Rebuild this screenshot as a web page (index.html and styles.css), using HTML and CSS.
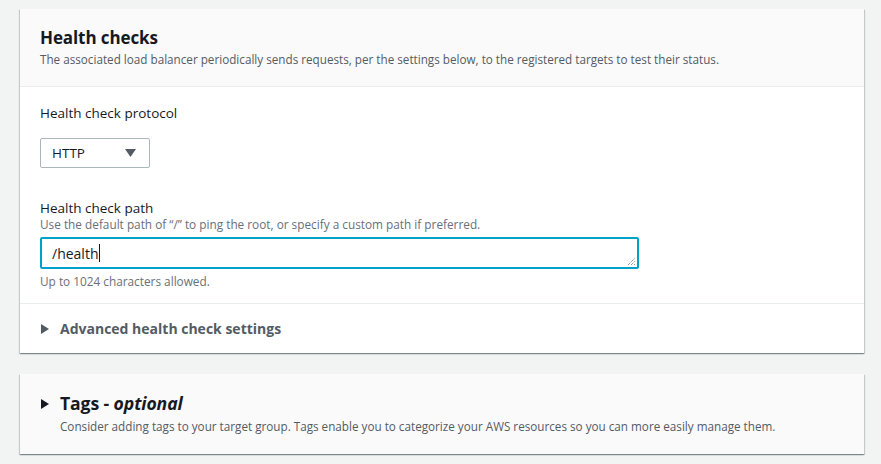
FILE: index.html
```html
<!DOCTYPE html>
<html>
<head>
<meta charset="utf-8">
<link rel="stylesheet" href="styles.css">
</head>
<body>
<div class="page">
  <section class="card">
    <header class="card-head">
      <h2 class="title">Health checks</h2>
      <p class="desc">The associated load balancer periodically sends requests, per the settings below, to the registered targets to test their status.</p>
    </header>
    <div class="card-body">
      <div class="field">
        <label class="label">Health check protocol</label>
        <div class="select">
          <span>HTTP</span>
          <svg class="caret" width="11" height="8" viewBox="0 0 11 8"><path d="M0 0 H11 L5.5 8 Z" fill="#545b64"/></svg>
        </div>
      </div>
      <div class="field field-path">
        <label class="label">Health check path</label>
        <div class="hint">Use the default path of “/” to ping the root, or specify a custom path if preferred.</div>
        <div class="textarea">
          <span class="value">/health</span><span class="cursor"></span>
          <svg class="grip" width="9" height="9" viewBox="0 0 9 9"><path d="M1 8 L8 1 M4 8 L8 4 M7 8 L8 7" stroke="#5f6b7a" stroke-width="1" stroke-dasharray="1 1"/></svg>
        </div>
        <div class="constraint">Up to 1024 characters allowed.</div>
      </div>
    </div>
    <div class="expander">
      <svg class="tri" width="8" height="10" viewBox="0 0 8 10"><path d="M0 0 L8 5 L0 10 Z" fill="#545b64"/></svg>
      <span class="exp-title">Advanced health check settings</span>
    </div>
  </section>

  <section class="card card-tags">
    <div class="tags-row">
      <svg class="tri" width="8" height="10" viewBox="0 0 8 10"><path d="M0 0 L8 5 L0 10 Z" fill="#16191f"/></svg>
      <div>
        <h2 class="title">Tags - <i>optional</i></h2>
        <p class="desc">Consider adding tags to your target group. Tags enable you to categorize your AWS resources so you can more easily manage them.</p>
      </div>
    </div>
  </section>
</div>
</body>
</html>
```

FILE: styles.css
```css
* { box-sizing: border-box; }
html, body { margin: 0; padding: 0; }
body {
  background: #f2f3f3;
  font-family: "Open Sans", "Noto Sans", sans-serif;
  color: #16191f;
  width: 881px;
  height: 464px;
  overflow: hidden;
}
.page {
  padding: 9px 17px 0 20px;
  display: flex;
  flex-direction: column;
  gap: 21px;
}
.card {
  background: #fff;
  box-shadow: 0 1px 1px 0 rgba(0,28,36,.3), 1px 1px 1px 0 rgba(0,28,36,.15), -1px 1px 1px 0 rgba(0,28,36,.15);
  width: 844px;
}
.card-head {
  background: #fafafa;
  border-bottom: 1px solid #eaeded;
  padding: 17px 20px 17px 20px;
  height: 78px;
}
.title {
  margin: 0;
  font-size: 17px;
  font-weight: 700;
  line-height: 24px;
  letter-spacing: -0.1px;
}
.card-tags .title { font-size: 17.6px; }
.title i { font-weight: 700; }
.desc {
  margin: 1px 0 0;
  font-size: 11.7px;
  line-height: 16px;
  color: #545b64;
}
.card-body {
  padding: 16px 20px 14px;
}
.field { display: flex; flex-direction: column; align-items: flex-start; }
.label {
  font-size: 13.5px;
  line-height: 20px;
  color: #16191f;
}
.select {
  margin-top: 15px;
  width: 110px;
  height: 30px;
  border: 1px solid #aab7b8;
  border-radius: 2px;
  display: flex;
  align-items: center;
  justify-content: space-between;
  padding: 0 13px 0 11px;
  font-size: 13.5px;
}
.field-path { margin-top: 30px; }
.hint {
  font-size: 11.8px;
  line-height: 15px;
  color: #687078;
  margin-top: -1px;
}
.textarea {
  position: relative;
  margin-top: 5px;
  width: 599px;
  height: 32px;
  border: 2px solid #00a1c9;
  border-radius: 2px;
  display: flex;
  align-items: center;
  padding: 0 0 0 10px;
  font-size: 14px;
}
.cursor {
  display: inline-block;
  width: 1px;
  height: 18px;
  background: #16191f;
  margin-left: 1px;
}
.grip { position: absolute; right: 1px; bottom: 1px; }
.constraint {
  margin-top: 5px;
  font-size: 11.8px;
  line-height: 15px;
  color: #687078;
}
.expander {
  border-top: 1px solid #eaeded;
  height: 50px;
  display: flex;
  align-items: center;
  padding: 0 21px;
  gap: 11px;
}
.exp-title {
  font-size: 14px;
  font-weight: 700;
  color: #545b64;
}
.card-tags { background: #fafafa; }
.tags-row {
  display: flex;
  align-items: flex-start;
  padding: 17px 20px 17px 21px;
  height: 80px;
  gap: 11px;
}
.tags-row .tri { margin-top: 8px; }
.tags-row .desc { margin-top: 3px; }
```
